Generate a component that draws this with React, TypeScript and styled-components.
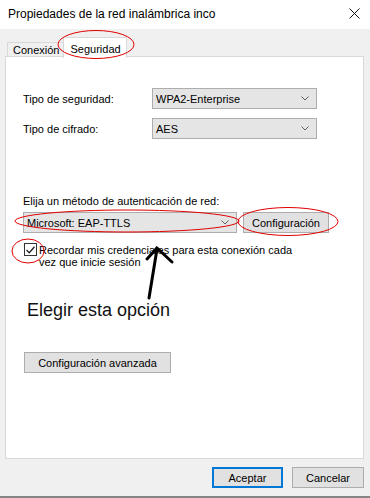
import styled, { createGlobalStyle } from 'styled-components';

const GlobalStyle = createGlobalStyle`
	html, body {
		margin: 0;
		padding: 0;
		background: #f0f0f0;
	}
	* {
		box-sizing: border-box;
	}
`;

const uiFont = `'Liberation Sans', Arial, sans-serif`;

const Window = styled.div`
	position: relative;
	width: 370px;
	height: 498px;
	background: #f0f0f0;
	font-family: ${uiFont};
	font-size: 11px;
	color: #000;
	display: flex;
	flex-direction: column;
	border-bottom: 2px solid #858585;
	overflow: hidden;
`;

const TitleBar = styled.div`
	height: 29px;
	flex: none;
	background: #fff;
	display: flex;
	align-items: center;
	justify-content: space-between;
	padding: 0 8px 2px 8px;
	font-size: 12px;
`;

const CloseIcon = styled.svg`
	width: 11px;
	height: 11px;
	margin-right: 2px;
`;

const TabStrip = styled.div`
	display: flex;
	align-items: flex-end;
	padding: 7px 0 0 7px;
	height: 28px;
	flex: none;
	position: relative;
	z-index: 1;
`;

const Tab = styled.div<{ $active?: boolean }>`
	height: ${p => (p.$active ? '21px' : '15px')};
	padding: ${p => (p.$active ? '4px 5px 0 6px' : '0 4px 0 5px')};
	background: ${p => (p.$active ? '#fff' : '#f0f0f0')};
	border: 1px solid #d9d9d9;
	border-bottom: ${p => (p.$active ? 'none' : '1px solid #d9d9d9')};
	margin-right: ${p => (p.$active ? '0' : '-1px')};
	display: flex;
	align-items: ${p => (p.$active ? 'flex-start' : 'center')};
	line-height: 14px;
	white-space: nowrap;
	margin-bottom: ${p => (p.$active ? '-1px' : '0')};
`;

const Panel = styled.div`
	margin: -1px 6px 0 5px;
	height: 403px;
	flex: none;
	background: #fff;
	border: 1px solid #d9d9d9;
	padding: 31px 0 0 17px;
	display: flex;
	flex-direction: column;
	align-items: flex-start;
`;

const FieldRow = styled.div`
	display: flex;
	align-items: center;
	width: 100%;
	margin-bottom: 9px;
`;

const FieldLabel = styled.span`
	width: 129px;
`;

const Combo = styled.div<{ $width: number }>`
	width: ${p => p.$width}px;
	height: 21px;
	background: #e5e5e5;
	border: 1px solid #adadad;
	display: flex;
	align-items: center;
	justify-content: space-between;
	padding: 0 7px 0 3px;
`;

const Chevron = styled.svg`
	width: 8px;
	height: 5px;
`;

const GroupLabel = styled.div`
	margin-top: 45px;
	line-height: 16px;
	margin-bottom: 3px;
`;

const MethodRow = styled.div`
	display: flex;
	align-items: center;
	gap: 6px;
`;

const Button = styled.div<{ $width: number; $primary?: boolean }>`
	width: ${p => p.$width}px;
	height: 21px;
	background: #e1e1e1;
	border: ${p => (p.$primary ? '2px solid #0078d7' : '1px solid #adadad')};
	display: flex;
	align-items: center;
	justify-content: center;
	white-space: nowrap;
`;

const CheckRow = styled.div`
	display: flex;
	align-items: flex-start;
	margin-top: 10px;
	margin-left: 1px;
`;

const CheckBox = styled.div`
	width: 13px;
	height: 13px;
	border: 1px solid #333;
	background: #fff;
	display: flex;
	align-items: center;
	justify-content: center;
	flex: none;
	margin-right: 2px;
`;

const CheckText = styled.div`
	line-height: 12px;
	padding-top: 1px;
`;

const Callout = styled.div`
	font-family: 'Liberation Sans', Arial, sans-serif;
	font-size: 18px;
	line-height: 21px;
	color: #111;
	margin: 32px 0 0 4px;
`;

const AdvancedButton = styled(Button)`
	margin-top: 31px;
	margin-left: 1px;
`;

const Footer = styled.div`
	display: flex;
	justify-content: flex-end;
	gap: 9px;
	padding: 8px 6px 0 0;
`;

const Annotations = styled.svg`
	position: absolute;
	left: 0;
	top: 0;
	width: 370px;
	height: 498px;
	pointer-events: none;
	z-index: 5;
`;

const DownChevron = () => (
	<Chevron viewBox="0 0 8 5">
		<path d="M0.5 0.5 L4 4 L7.5 0.5" fill="none" stroke="#606060" strokeWidth="1" />
	</Chevron>
);

const App = () => {
	return (
		<>
			<GlobalStyle />
			<Window>
				<TitleBar>
					<span>Propiedades de la red inalámbrica inco</span>
					<CloseIcon viewBox="0 0 11 11">
						<path d="M0.5 0.5 L10.5 10.5 M10.5 0.5 L0.5 10.5" stroke="#111" strokeWidth="1" />
					</CloseIcon>
				</TitleBar>
				<TabStrip>
					<Tab>Conexión</Tab>
					<Tab $active>Seguridad</Tab>
				</TabStrip>
				<Panel>
					<FieldRow>
						<FieldLabel>Tipo de seguridad:</FieldLabel>
						<Combo $width={165}>
							<span>WPA2-Enterprise</span>
							<DownChevron />
						</Combo>
					</FieldRow>
					<FieldRow>
						<FieldLabel>Tipo de cifrado:</FieldLabel>
						<Combo $width={165}>
							<span>AES</span>
							<DownChevron />
						</Combo>
					</FieldRow>
					<GroupLabel>Elija un método de autenticación de red:</GroupLabel>
					<MethodRow>
						<Combo $width={214}>
							<span>Microsoft: EAP-TTLS</span>
							<DownChevron />
						</Combo>
						<Button $width={86}>Configuración</Button>
					</MethodRow>
					<CheckRow>
						<CheckBox>
							<svg width="9" height="8" viewBox="0 0 9 8">
								<path d="M0.5 4 L3.3 6.8 L8.5 0.8" fill="none" stroke="#222" strokeWidth="1.3" />
							</svg>
						</CheckBox>
						<CheckText>
							Recordar mis credenciales para esta conexión cada
							<br />
							vez que inicie sesión
						</CheckText>
					</CheckRow>
					<Callout>Elegir esta opción</Callout>
					<AdvancedButton $width={147}>Configuración avanzada</AdvancedButton>
				</Panel>
				<Footer>
					<Button $width={71} $primary>Aceptar</Button>
					<Button $width={72}>Cancelar</Button>
				</Footer>
				<Annotations viewBox="0 0 370 498">
					<g fill="none" stroke="#e00000" strokeWidth="1">
						<ellipse cx="96" cy="44.5" rx="38" ry="14" />
						<ellipse cx="127" cy="221" rx="112" ry="11" />
						<ellipse cx="288" cy="221.5" rx="50" ry="14" />
						<ellipse cx="28" cy="251" rx="16" ry="12" />
					</g>
					<g fill="none" stroke="#000" strokeWidth="3" strokeLinecap="round" strokeLinejoin="round">
						<path d="M149 298 L157 249" />
						<path d="M147 259 L157 248 L172 262" />
					</g>
				</Annotations>
			</Window>
		</>
	);
};

export default App;
